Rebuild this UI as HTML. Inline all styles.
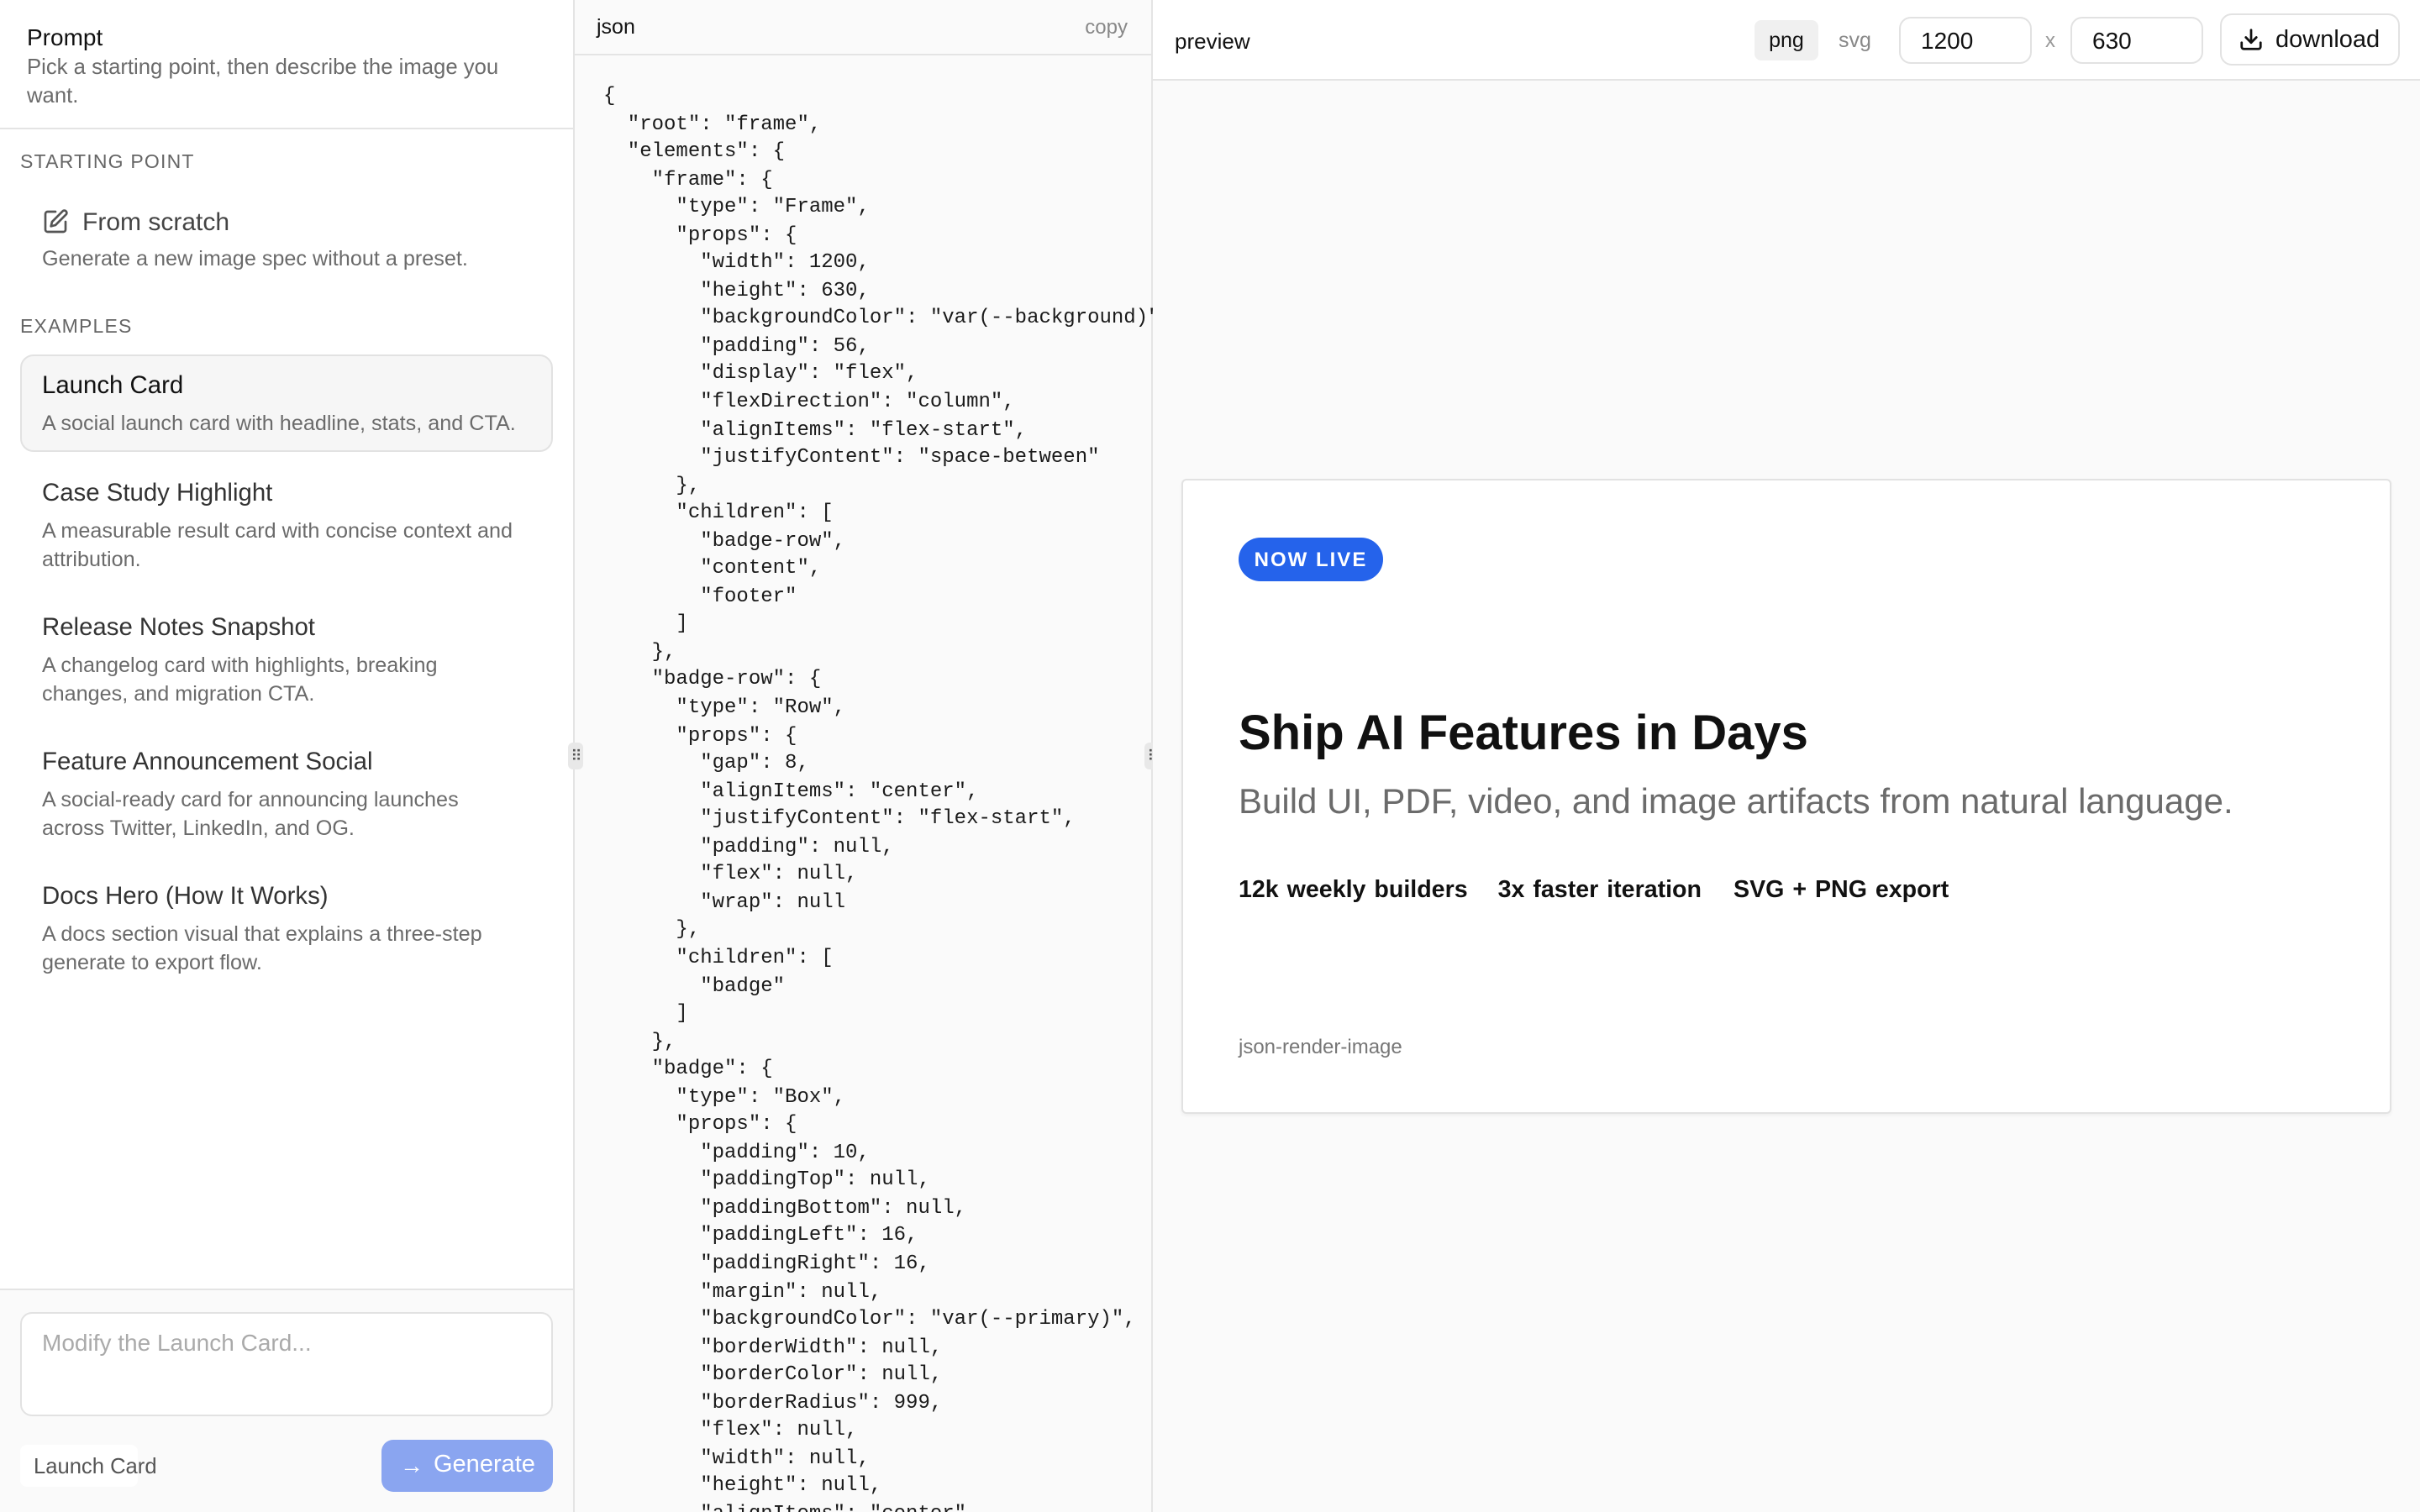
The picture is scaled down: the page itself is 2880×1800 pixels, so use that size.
<!DOCTYPE html>
<html><head><meta charset="utf-8"><style>
*{box-sizing:border-box;margin:0;padding:0}
html,body{width:2880px;height:1800px;overflow:hidden;background:#fff}
#w{width:1440px;height:900px;transform:scale(2);transform-origin:0 0;position:relative;font-family:"Liberation Sans",Arial,sans-serif;color:#111}
.abs{position:absolute}
#left{left:0;top:0;width:342px;height:900px;border-right:1px solid #e4e4e4;background:#fff}
#json{left:342px;top:0;width:344px;height:900px;background:#fafafa;border-right:1px solid #e4e4e4}
#prev{left:686px;top:0;width:754px;height:900px;background:#fafafa}
.t{position:absolute;white-space:nowrap}
.h{font-size:14.7px;color:#111}
.d{font-size:12.6px;color:#6b6b6b;line-height:16.5px}
.lab{font-size:11.5px;color:#666;letter-spacing:.6px}
pre{position:absolute;left:17px;top:49px;font-family:"Liberation Mono","DejaVu Sans Mono",monospace;font-size:12px;line-height:16.55px;color:#1a1a1a}
.btn{position:absolute;border:1px solid #e2e2e2;border-radius:7px;background:#fff;font-size:14px;color:#111}
.grip{position:absolute;width:9px;height:16px;background:#e8e8e8;border-radius:3px;top:442px;font-size:9px;line-height:16px;text-align:center;color:#555;letter-spacing:-1px}
</style></head><body><div id="w">
<div id="left" class="abs">
 <div class="t h" style="left:16px;top:14px;font-size:14px">Prompt</div>
 <div class="t d" style="left:16px;top:32px;white-space:normal;width:310px;font-size:12.85px">Pick a starting point, then describe the image you want.</div>
 <div class="abs" style="left:0;top:76px;width:341px;height:1px;background:#e4e4e4"></div>
 <div class="t lab" style="left:12px;top:91px">STARTING POINT</div>
 <svg class="abs" style="left:25px;top:124px" width="16" height="16" viewBox="0 0 24 24" fill="none" stroke="#555" stroke-width="2" stroke-linecap="round" stroke-linejoin="round"><path d="M12 3H5a2 2 0 0 0-2 2v14a2 2 0 0 0 2 2h14a2 2 0 0 0 2-2v-7"/><path d="M18.4 2.6a2.1 2.1 0 0 1 3 3L12 15l-4 1 1-4z"/></svg>
 <div class="t h" style="left:49px;top:124px;font-size:15px;color:#444">From scratch</div>
 <div class="t d" style="left:25px;top:146px">Generate a new image spec without a preset.</div>
 <div class="t lab" style="left:12px;top:189px">EXAMPLES</div>
 <div class="abs" style="left:12px;top:211px;width:317px;height:58px;border:1px solid #e2e2e2;border-radius:8px;background:#f6f6f6"></div>
 <div class="t h" style="left:25px;top:222px">Launch Card</div>
 <div class="t d" style="left:25px;top:244px">A social launch card with headline, stats, and CTA.</div>
 <div class="t h" style="left:25px;top:286px;color:#333">Case Study Highlight</div>
 <div class="t d" style="left:25px;top:308px">A measurable result card with concise context and<br>attribution.</div>
 <div class="t h" style="left:25px;top:366px;color:#333">Release Notes Snapshot</div>
 <div class="t d" style="left:25px;top:388px">A changelog card with highlights, breaking<br>changes, and migration CTA.</div>
 <div class="t h" style="left:25px;top:446px;color:#333">Feature Announcement Social</div>
 <div class="t d" style="left:25px;top:468px">A social-ready card for announcing launches<br>across Twitter, LinkedIn, and OG.</div>
 <div class="t h" style="left:25px;top:526px;color:#333">Docs Hero (How It Works)</div>
 <div class="t d" style="left:25px;top:548px">A docs section visual that explains a three-step<br>generate to export flow.</div>
 <div class="abs" style="left:0;top:767px;width:341px;height:133px;background:#fafafa;border-top:1px solid #e4e4e4"></div>
 <div class="abs" style="left:12px;top:781px;width:317px;height:62px;border:1px solid #e2e2e2;border-radius:7px;background:#fff"></div>
 <div class="t" style="left:25px;top:791px;font-size:14px;color:#aaa">Modify the Launch Card...</div>
 <div class="abs" style="left:12px;top:860px;width:70px;height:25px;background:#fff;border-radius:4px"></div>
 <div class="t" style="left:20px;top:865px;font-size:12.8px;color:#555">Launch Card</div>
 <div class="abs" style="left:227px;top:857px;width:102px;height:31px;background:#8aa5f0;border-radius:7px;color:#fff;font-size:14.5px;line-height:31px;padding-left:31px">Generate</div>
 <div class="t" style="left:238px;top:864px;font-size:14px;color:#fff">→</div>
</div>
<div id="json" class="abs">
 <div class="t" style="left:13px;top:9px;font-size:12.5px">json</div>
 <div class="t" style="right:14px;top:9px;font-size:12px;color:#888">copy</div>
 <div class="abs" style="left:0;top:32px;width:343px;height:1px;background:#e4e4e4"></div>
<pre>{
  "root": "frame",
  "elements": {
    "frame": {
      "type": "Frame",
      "props": {
        "width": 1200,
        "height": 630,
        "backgroundColor": "var(--background)",
        "padding": 56,
        "display": "flex",
        "flexDirection": "column",
        "alignItems": "flex-start",
        "justifyContent": "space-between"
      },
      "children": [
        "badge-row",
        "content",
        "footer"
      ]
    },
    "badge-row": {
      "type": "Row",
      "props": {
        "gap": 8,
        "alignItems": "center",
        "justifyContent": "flex-start",
        "padding": null,
        "flex": null,
        "wrap": null
      },
      "children": [
        "badge"
      ]
    },
    "badge": {
      "type": "Box",
      "props": {
        "padding": 10,
        "paddingTop": null,
        "paddingBottom": null,
        "paddingLeft": 16,
        "paddingRight": 16,
        "margin": null,
        "backgroundColor": "var(--primary)",
        "borderWidth": null,
        "borderColor": null,
        "borderRadius": 999,
        "flex": null,
        "width": null,
        "height": null,
        "alignItems": "center"</pre>
</div>
<div class="grip" style="left:338px">⠿</div>
<div class="grip" style="left:681px">⠿</div>
<div id="prev" class="abs">
 <div class="abs" style="left:0;top:0;width:754px;height:48px;background:#fff;border-bottom:1px solid #e4e4e4"></div>
 <div class="t" style="left:13px;top:17px;font-size:13px">preview</div>
 <div class="abs" style="left:358px;top:12px;width:38px;height:24px;background:#f0f0f0;border-radius:4px;font-size:12.5px;line-height:24px;text-align:center">png</div>
 <div class="t" style="left:408px;top:17px;font-size:12.5px;color:#888">svg</div>
 <div class="btn" style="left:444px;top:10px;width:79px;height:28px;padding:5px 12px">1200</div>
 <div class="t" style="left:531px;top:17px;font-size:12px;color:#999">x</div>
 <div class="btn" style="left:546px;top:10px;width:79px;height:28px;padding:5px 12px">630</div>
 <div class="btn" style="left:635px;top:8px;width:107px;height:31px;padding:7px 0 0 32px;font-size:14.5px">download</div>
 <svg class="abs" style="left:646px;top:16px" width="15" height="15" viewBox="0 0 24 24" fill="none" stroke="#111" stroke-width="2.2" stroke-linecap="round" stroke-linejoin="round"><path d="M21 15v4a2 2 0 0 1-2 2H5a2 2 0 0 1-2-2v-4"/><path d="M7 10l5 5 5-5"/><path d="M12 15V3"/></svg>
 <div class="abs" style="left:17px;top:285px;width:720px;height:378px;background:#fff;border:1px solid #e2e2e2;border-radius:3px;box-shadow:0 1px 2px rgba(0,0,0,.05)">
  <div class="abs" style="left:33px;top:34px;height:26px;width:86px;background:#2563eb;border-radius:13px;color:#fff;font-size:12px;font-weight:bold;letter-spacing:1px;line-height:26px;text-align:center">NOW LIVE</div>
  <div class="t" style="left:33px;top:135px;font-size:29px;font-weight:bold;color:#111">Ship AI Features in Days</div>
  <div class="t" style="left:33px;top:180px;font-size:21px;color:#6b6b6b">Build UI, PDF, video, and image artifacts from natural language.</div>
  <div class="t" style="left:33px;top:236px;font-size:14.3px;font-weight:bold;color:#111;word-spacing:1px">12k weekly builders<span style="margin-left:18px">3x faster iteration</span><span style="margin-left:19px">SVG + PNG export</span></div>
  <div class="t" style="left:33px;top:330px;font-size:12px;color:#777">json-render-image</div>
 </div>
</div>
</div></body></html>
